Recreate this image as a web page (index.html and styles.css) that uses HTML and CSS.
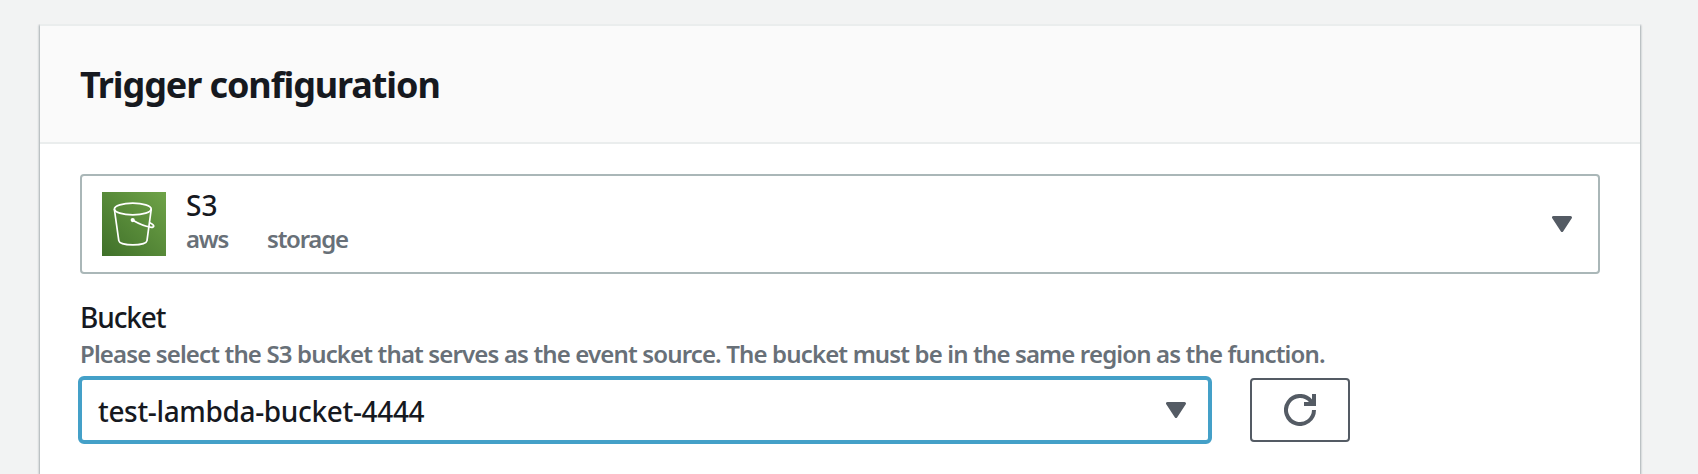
FILE: index.html
```
<!DOCTYPE html>
<html lang="en">
<head>
<meta charset="utf-8">
<title>Trigger configuration</title>
<link rel="stylesheet" href="styles.css">
</head>
<body>
<main class="card">
  <header class="card-header"><h2 class="title">Trigger configuration</h2></header>
  <div class="card-body">
    <div class="source-select">
      <svg class="source-icon" viewBox="0 0 64 64">
        <defs><linearGradient id="green" x1="0" y1="1" x2="1" y2="0"><stop offset="0" stop-color="#3f7029"/><stop offset="1" stop-color="#6fa348"/></linearGradient></defs>
        <rect width="64" height="64" fill="url(#green)"/>
        <g fill="none" stroke="#fff" stroke-width="1.7" stroke-linecap="round" stroke-linejoin="round">
          <ellipse cx="30.8" cy="17" rx="18.4" ry="5.8"/>
          <path d="M12.4 17.5 16.8 48.6C17.8 54.3 44 54.3 45 48.6L49.2 17.5"/>
          <path d="M30.7 28.2C36 31.2 42 34 48.5 35.2C52.5 35.8 53.2 33.4 48.2 31"/>
        </g>
        <circle cx="30.7" cy="28.1" r="2.1" fill="#fff"/>
      </svg>
      <div class="source-text">
        <div class="source-name">S3</div>
        <div class="source-tags"><span class="tag-aws">aws</span><span class="tag-storage">storage</span></div>
      </div>
      <svg class="caret" viewBox="0 0 20 16"><path d="M1.5 1.5H18.5L10 14.5Z"/></svg>
    </div>
    <div class="label"><span>Bucket</span></div>
    <div class="hint"><span>Please select the S3 bucket that serves as the event source. The bucket must be in the same region as the function.</span></div>
    <div class="bucket-row">
      <div class="bucket-select">
        <span class="bucket-value">test-lambda-bucket-4444</span>
        <svg class="caret" viewBox="0 0 20 16"><path d="M1.5 1.5H18.5L10 14.5Z"/></svg>
      </div>
      <button class="refresh" aria-label="Refresh">
        <svg class="refresh-icon" viewBox="0 0 32 32"><path d="M30 16A14 14 0 1 1 27 7.3L30 10M30 0V10H20"/></svg>
      </button>
    </div>
  </div>
</main>
</body>
</html>
```
FILE: styles.css
```
* { box-sizing: border-box; }
body {
  margin: 0;
  height: 474px;
  padding: 24px 58px 0 40px;
  overflow: hidden;
  background: #f2f3f3;
  color: #16191f;
  font-family: "Noto Sans", sans-serif;
  font-size: 28px;
}
.card {
  height: 450px;
  background: #fff;
  border-top: 2px solid #eaeded;
  box-shadow: 1px 1px 2px rgba(0, 28, 36, .3), -1px 1px 2px rgba(0, 28, 36, .3);
  clip-path: inset(0 -8px);
}
.card-header {
  height: 118px;
  padding: 2px 40px 0;
  display: flex;
  align-items: center;
  background: #fafafa;
  border-bottom: 2px solid #eaeded;
}
.title { margin: 0; font-size: 36px; line-height: 44px; font-weight: 700; letter-spacing: -1.1px; }
.card-body { padding: 30px 40px 0; }
.source-select {
  height: 100px;
  display: flex;
  align-items: center;
  padding: 0 26px 0 20px;
  border: 2px solid #aab7b8;
  border-radius: 4px;
}
.source-icon { width: 64px; height: 64px; flex: none; }
.source-text { flex: 1; margin: 0 0 6px 20px; }
.source-name { line-height: 36px; letter-spacing: 0; font-weight: 500; }
.source-tags { display: flex; gap: 39px; line-height: 32px; font-size: 24px; color: #687078; font-weight: 600; letter-spacing: -1.25px; }
.caret { width: 20px; height: 16px; flex: none; fill: #545b64; stroke: #545b64; stroke-width: 3; stroke-linejoin: round; }
.label { margin-top: 25px; line-height: 36px; font-weight: 500; letter-spacing: -1.1px; }
.hint { margin-top: 3px; line-height: 32px; font-size: 24px; color: #687078; font-weight: 600; letter-spacing: -.855px; white-space: nowrap; }
.bucket-row { display: flex; align-items: center; gap: 38px; margin: 6px 0 0 -2px; }
.bucket-select {
  width: 1134px;
  height: 68px;
  display: flex;
  align-items: center;
  justify-content: space-between;
  padding: 0 22px 0 16px;
  border: 4px solid #44a0c8;
  border-radius: 6px;
}
.bucket-value { padding-top: 2px; font-weight: 500; letter-spacing: -.34px; }
.refresh {
  width: 100px;
  height: 64px;
  padding: 0;
  display: grid;
  place-items: center;
  background: #fff;
  border: 2px solid #545b64;
  border-radius: 4px;
}
.refresh-icon { width: 32px; height: 32px; fill: none; stroke: #545b64; stroke-width: 4; overflow: hidden; }
```
